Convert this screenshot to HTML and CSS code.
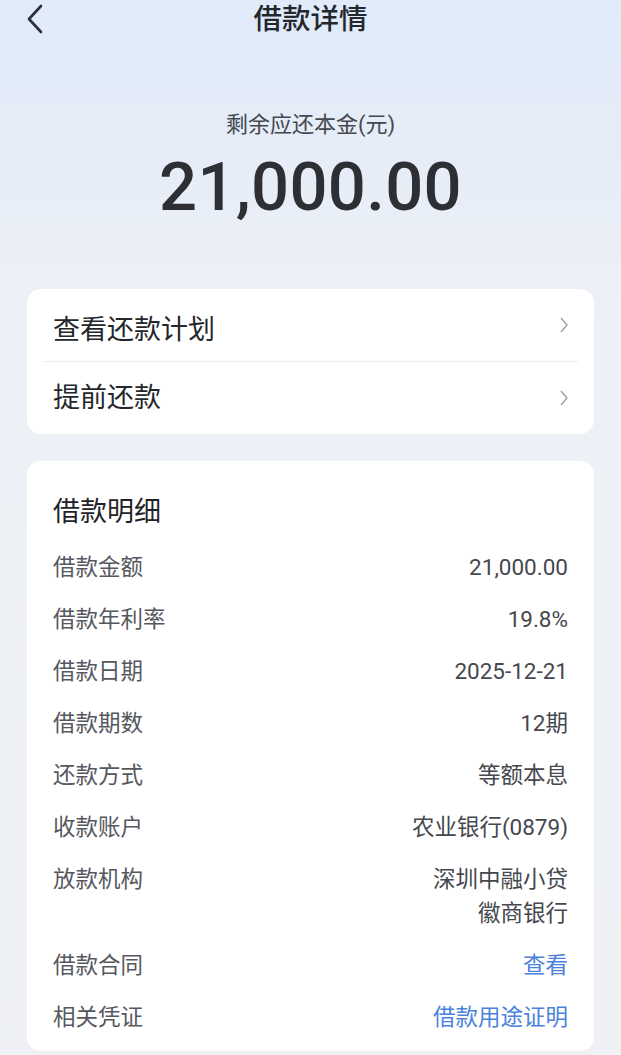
FILE: index.html
```html
<!DOCTYPE html>
<html lang="zh-CN">
<head>
<meta charset="utf-8">
<title>借款详情</title>
<link rel="stylesheet" href="styles.css">
</head>
<body>
<div class="page">
  <header class="nav">
    <div class="nav-left">
      <svg class="back" width="18" height="30" viewBox="0 0 18 30"><path d="M15 2 L3 15 L15 28" fill="none" stroke="#2b2f36" stroke-width="2.6" stroke-linecap="round" stroke-linejoin="round"/></svg>
    </div>
    <h1 class="nav-title">借款详情</h1>
    <div class="nav-right"></div>
  </header>

  <section class="hero">
    <div class="hero-label">剩余应还本金(元)</div>
    <div class="hero-amount">21,000.00</div>
  </section>

  <section class="card menu">
    <div class="menu-row">
      <span class="menu-text">查看还款计划</span>
      <svg class="chev" width="10" height="18" viewBox="0 0 10 18"><path d="M2 2 L8 9 L2 16" fill="none" stroke="#9a9ca2" stroke-width="1.3"/></svg>
    </div>
    <div class="menu-row">
      <span class="menu-text">提前还款</span>
      <svg class="chev" width="10" height="18" viewBox="0 0 10 18"><path d="M2 2 L8 9 L2 16" fill="none" stroke="#9a9ca2" stroke-width="1.3"/></svg>
    </div>
  </section>

  <section class="card detail">
    <h2 class="detail-title">借款明细</h2>
    <div class="row"><span class="label">借款金额</span><span class="value">21,000.00</span></div>
    <div class="row"><span class="label">借款年利率</span><span class="value">19.8%</span></div>
    <div class="row"><span class="label">借款日期</span><span class="value">2025-12-21</span></div>
    <div class="row"><span class="label">借款期数</span><span class="value">12期</span></div>
    <div class="row"><span class="label">还款方式</span><span class="value">等额本息</span></div>
    <div class="row"><span class="label">收款账户</span><span class="value">农业银行(0879)</span></div>
    <div class="row"><span class="label">放款机构</span><span class="value">深圳中融小贷<br>徽商银行</span></div>
    <div class="row"><span class="label">借款合同</span><span class="value link">查看</span></div>
    <div class="row"><span class="label">相关凭证</span><span class="value link">借款用途证明</span></div>
  </section>
</div>
</body>
</html>
```

FILE: styles.css
```css
html, body {
  margin: 0;
  padding: 0;
}
body {
  width: 621px;
  height: 1055px;
  overflow: hidden;
  background: linear-gradient(180deg, #e0eaf9 0px, #e6edf8 160px, #edf0f6 300px, #eff1f5 1055px);
  font-family: "Roboto", "Noto Sans CJK SC", sans-serif;
  color: #333;
}
.page {
  display: flex;
  flex-direction: column;
}
.nav {
  height: 42px;
  display: grid;
  grid-template-columns: 1fr auto 1fr;
  align-items: center;
}
.nav-left {
  padding-left: 26px;
  display: flex;
  align-items: center;
}
.back {
  display: block;
  margin-top: -4px;
}
.nav-title {
  margin: 0;
  font-size: 28.5px;
  font-weight: 500;
  color: #23272e;
  line-height: 40px;
  margin-top: -2px;
}
.hero {
  display: flex;
  flex-direction: column;
  align-items: center;
  padding-top: 68px;
}
.hero-label {
  font-size: 22px;
  line-height: 30px;
  color: #45484e;
}
.hero-amount {
  margin-top: 12px;
  font-size: 67px;
  line-height: 70px;
  font-weight: 500;
  color: #2d2f34;
  letter-spacing: 0.3px;
}
.card {
  margin: 0 27px;
  background: #fff;
  border-radius: 14px;
}
.menu {
  margin-top: 67px;
  padding: 0 16px;
}
.menu-row {
  height: 72px;
  padding: 0 10px;
  display: flex;
  align-items: center;
  justify-content: space-between;
}
.menu-row + .menu-row {
  border-top: 1px solid #ebedf0;
}
.menu-text {
  font-size: 27px;
  color: #24272c;
  margin-top: 4px;
}
.menu-row + .menu-row .menu-text {
  margin-top: -6px;
}
.chev {
  display: block;
  margin-right: -1px;
}
.detail {
  margin-top: 27px;
  padding: 36px 26px 8px;
}
.detail-title {
  margin: 0 0 14px;
  font-size: 27px;
  line-height: 30px;
  font-weight: 400;
  color: #1f2227;
}
.row {
  display: flex;
  justify-content: space-between;
  align-items: flex-start;
  padding: 9px 0;
  line-height: 34px;
  font-size: 22.5px;
}
.label {
  color: #55585e;
}
.value {
  color: #45484e;
  text-align: right;
}
.value.link {
  color: #4b82dc;
}
```
